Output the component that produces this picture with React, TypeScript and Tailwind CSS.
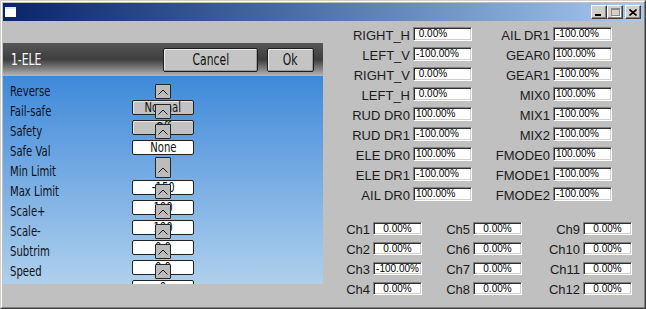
import React from "react";

type Row = {
  label: string;
  box?: { kind: "gray" | "white"; text: string };
  spin?: "normal" | "tall";
};

const rows: Row[] = [
  { label: "Reverse", spin: "normal" },
  { label: "Fail-safe", box: { kind: "gray", text: "Normal" }, spin: "normal" },
  { label: "Safety", box: { kind: "gray", text: "Off" }, spin: "normal" },
  { label: "Safe Val", box: { kind: "white", text: "None" } },
  { label: "Min Limit", spin: "tall" },
  { label: "Max Limit", box: { kind: "white", text: "-150" }, spin: "normal" },
  { label: "Scale+", box: { kind: "white", text: "100" }, spin: "normal" },
  { label: "Scale-", box: { kind: "white", text: "100" }, spin: "normal" },
  { label: "Subtrim", box: { kind: "white", text: "0.0" }, spin: "normal" },
  { label: "Speed", box: { kind: "white", text: "0.0" }, spin: "normal" },
  { label: "", box: { kind: "white", text: "0" } },
];

const col1: [string, string][] = [
  ["RIGHT_H", " 0.00%"],
  ["LEFT_V", "-100.00%"],
  ["RIGHT_V", " 0.00%"],
  ["LEFT_H", " 0.00%"],
  ["RUD DR0", "100.00%"],
  ["RUD DR1", "-100.00%"],
  ["ELE DR0", "100.00%"],
  ["ELE DR1", "-100.00%"],
  ["AIL DR0", "100.00%"],
];

const col2: [string, string][] = [
  ["AIL DR1", "-100.00%"],
  ["GEAR0", "100.00%"],
  ["GEAR1", "-100.00%"],
  ["MIX0", "100.00%"],
  ["MIX1", "-100.00%"],
  ["MIX2", "-100.00%"],
  ["FMODE0", "100.00%"],
  ["FMODE1", "-100.00%"],
  ["FMODE2", "-100.00%"],
];

const chRows: [string, string, string, string, string, string][] = [
  ["Ch1", "0.00%", "Ch5", "0.00%", "Ch9", "0.00%"],
  ["Ch2", "0.00%", "Ch6", "0.00%", "Ch10", "0.00%"],
  ["Ch3", "-100.00%", "Ch7", "0.00%", "Ch11", "0.00%"],
  ["Ch4", "0.00%", "Ch8", "0.00%", "Ch12", "0.00%"],
];

function Chevron() {
  return (
    <svg width="12" height="8" viewBox="0 0 12 8" className="block">
      <polyline points="1.5,6.5 6,2 10.5,6.5" fill="none" stroke="#1e1e1e" strokeWidth="1" />
    </svg>
  );
}

function Spin({ kind }: { kind: "normal" | "tall" }) {
  return (
    <div
      className={
        kind === "tall"
          ? "absolute left-[23px] top-[-4px] h-[21px] w-[16px] bg-[#bcbcbc] border border-[#262626] rounded-[1px] flex items-end justify-center pb-[3px]"
          : "absolute left-[23px] top-[3px] h-[15px] w-[16px] bg-[#bcbcbc] border border-[#262626] rounded-[1px] flex items-center justify-center"
      }
    >
      <Chevron />
    </div>
  );
}

function Field({ text, w }: { text: string; w: "wide" | "narrow" }) {
  return (
    <div
      className={
        (w === "wide" ? "w-[59px] h-[14px] pl-[2px] " : "w-[49px] h-[13px] justify-center ") +
        "flex items-center bg-white border border-t-[#808080] border-l-[#808080] border-r-white border-b-white shadow-[inset_1px_1px_0_#303030,inset_-1px_-1px_0_#d4d0c8] font-['Liberation_Sans',Arial,sans-serif] text-[10px] leading-[10px] text-black whitespace-pre overflow-hidden"
      }
    >
      {text}
    </div>
  );
}

function TitleButton({ children }: { children: React.ReactNode }) {
  return (
    <div className="w-[16px] h-[14px] bg-[#d4d0c8] border border-t-white border-l-white border-r-[#404040] border-b-[#404040] shadow-[inset_-1px_-1px_0_#808080] flex items-center justify-center relative">
      {children}
    </div>
  );
}

export default function App() {
  const narrow = "font-['DejaVu_Sans_Condensed','DejaVu_Sans',sans-serif]";
  return (
    <div className="w-[646px] h-[309px] bg-[#c0c0c0] border border-t-[#d4d0c8] border-l-[#d4d0c8] border-r-[#404040] border-b-[#404040] overflow-hidden">
      <div className="h-full border border-t-white border-l-white border-r-[#808080] border-b-[#808080] p-px flex flex-col">
        {/* title bar */}
        <div className="h-[18px] shrink-0 bg-linear-to-r from-[#0a246a] to-[#a6caf0] flex items-center pl-[2px] pr-[2px]">
          <div className="w-[11px] h-[10px] bg-white border-t-2 border-[#dfe8f8]" />
          <div className="flex-1" />
          <TitleButton>
            <div className="absolute left-[3px] bottom-[2px] w-[6px] h-[2px] bg-black" />
          </TitleButton>
          <TitleButton>
            <div className="w-[9px] h-[8px] border border-t-2 border-[#8c8c8c] shadow-[1px_1px_0_white]" />
          </TitleButton>
          <div className="w-[2px]" />
          <TitleButton>
            <svg width="8" height="7" viewBox="0 0 8 7">
              <path d="M0.5 0.5 L7.5 6.5 M7.5 0.5 L0.5 6.5" stroke="black" strokeWidth="1.6" />
            </svg>
          </TitleButton>
        </div>

        {/* client */}
        <div className="flex flex-1 min-h-0">
          {/* left panel */}
          <div className="w-[320px] shrink-0 pt-[22px] flex flex-col">
            <div className="h-[33px] shrink-0 bg-linear-to-b from-[#575757] via-[#3e3e3e] to-[#b8b8b8] flex items-start pt-[5px] pr-[9px]">
              <div className={`${narrow} text-white text-[15px] leading-[24px] pl-[8px]`}>
                <span className="inline-block origin-left scale-x-[0.8]">1-ELE</span>
              </div>
              <div className="flex-1" />
              <div
                className={`${narrow} w-[95px] h-[24px] bg-[#c4c4c4] border border-[#1c1c1c] rounded-[2px] shadow-[inset_1px_1px_0_#eeeeee,inset_-1px_-1px_0_#9a9a9a] flex items-center justify-center text-[15px] text-[#111]`}
              >
                <span className="inline-block scale-x-[0.8]">Cancel</span>
              </div>
              <div
                className={`${narrow} ml-[9px] w-[47px] h-[24px] bg-[#c4c4c4] border border-[#1c1c1c] rounded-[2px] shadow-[inset_1px_1px_0_#eeeeee,inset_-1px_-1px_0_#9a9a9a] flex items-center justify-center text-[15px] text-[#111]`}
              >
                <span className="inline-block scale-x-[0.8]">Ok</span>
              </div>
            </div>
            <div className="h-[208px] shrink-0 bg-linear-to-b from-[#3d89d9] to-[#afd0ec] overflow-hidden pt-[5px] pl-[7px]">
              {rows.map((r, i) => (
                <div key={i} className="h-[20px] flex items-center">
                  <div className={`${narrow} w-[122px] text-[14px] leading-[20px] text-[#111118]`}>
                    <span className="inline-block origin-left scale-x-[0.8]">{r.label}</span>
                  </div>
                  <div className="relative w-[62px] h-[20px]">
                    {r.box && (
                      <div
                        className={
                          (r.box.kind === "gray"
                            ? "bg-[#c2c2c2] shadow-[inset_1px_1px_0_#e8e8e8] "
                            : "bg-white ") +
                          `${narrow} -mt-[1px] h-[15px] w-[62px] border border-[#222] rounded-[2px] flex items-center justify-center text-[14px] leading-[13px] text-[#111] overflow-hidden`
                        }
                      >
                        <span className="inline-block scale-x-[0.8]">{r.box.text}</span>
                      </div>
                    )}
                    {r.spin && <Spin kind={r.spin} />}
                  </div>
                </div>
              ))}
            </div>
            <div className="flex-1" />
          </div>

          {/* right area */}
          <div className="flex-1 pl-[7px] pt-[6px] font-['Liberation_Sans',Arial,sans-serif] text-[#1c1c1c]">
            <div className="flex">
              <div className="w-[142px]">
                {col1.map(([l, v]) => (
                  <div key={l} className="h-[20px] flex items-start">
                    <div className="w-[80px] text-right text-[13px] leading-[14px] pt-[2px] whitespace-pre">{l}</div>
                    <div className="ml-[3px]">
                      <Field text={v} w="wide" />
                    </div>
                  </div>
                ))}
              </div>
              <div className="w-[140px]">
                {col2.map(([l, v]) => (
                  <div key={l} className="h-[20px] flex items-start">
                    <div className="w-[78px] text-right text-[13px] leading-[14px] pt-[2px] whitespace-pre">{l}</div>
                    <div className="ml-[3px]">
                      <Field text={v} w="wide" />
                    </div>
                  </div>
                ))}
              </div>
            </div>
            <div className="mt-[15px]">
              {chRows.map((r) => (
                <div key={r[0]} className="h-[20px] flex items-start">
                  <div className="w-[40px] text-right text-[13px] leading-[14px] pt-[1px]">{r[0]}</div>
                  <div className="ml-[3px]">
                    <Field text={r[1]} w="narrow" />
                  </div>
                  <div className="w-[48px] text-right text-[13px] leading-[14px] pt-[1px]">{r[2]}</div>
                  <div className="ml-[3px]">
                    <Field text={r[3]} w="narrow" />
                  </div>
                  <div className="w-[58px] text-right text-[13px] leading-[14px] pt-[1px]">{r[4]}</div>
                  <div className="ml-[3px]">
                    <Field text={r[5]} w="narrow" />
                  </div>
                </div>
              ))}
            </div>
          </div>
        </div>
      </div>
    </div>
  );
}
